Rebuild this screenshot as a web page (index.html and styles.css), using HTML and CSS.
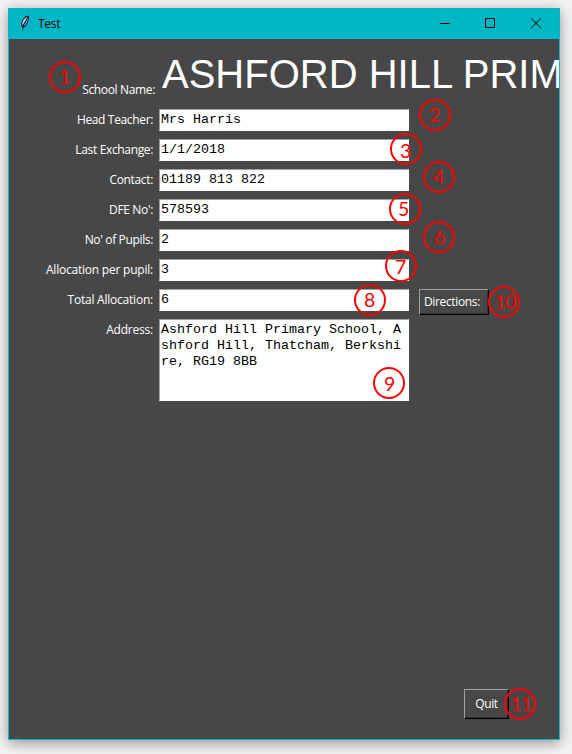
FILE: index.html
```html
<!DOCTYPE html>
<html lang="en">
<head>
<meta charset="utf-8">
<title>Test</title>
<link rel="stylesheet" href="styles.css">
</head>
<body>
<div class="window">
  <header class="titlebar">
    <svg class="feather" width="10" height="17" viewBox="0 0 10 17">
      <path d="M2.3 15.5 L2.6 12 L1.2 11 L1.3 7.5 L3.3 3.5 L6 1 L8.8 .7 L9 4 L7.5 8.5 L5.5 11.5 L3.5 12.5 L2.8 16" fill="#101822"/>
      <path d="M2.2 10.5 L2.4 7.5 L4 4.2 L7.6 1.6 L5.3 6 Z" fill="#b9d8f5"/>
      <path d="M3.4 11 L6 6.5 L8.2 2.2 L8 5 L6.6 8.5 L5 10.9 Z" fill="#4f86d0"/>
    </svg>
    <span class="title">Test</span>
    <svg class="controls" width="102" height="11" viewBox="0 0 102 11" fill="none" stroke="#000">
      <path d="M0 5.5H10M45.5 .5H54.5V9.5H45.5ZM91 .2L101 10.2M101 .2L91 10.2"/>
    </svg>
  </header>
  <main class="client">
    <div class="school">
      <span class="label school-label">School Name:</span>
      <span class="school-name">ASHFORD HILL PRIM</span>
    </div>
    <div class="form">
      <span class="label">Head Teacher:</span><div class="field">Mrs Harris</div>
      <span class="label">Last Exchange:</span><div class="field">1/1/2018</div>
      <span class="label">Contact:</span><div class="field">01189 813 822</div>
      <span class="label">DFE No':</span><div class="field">578593</div>
      <span class="label">No' of Pupils:</span><div class="field">2</div>
      <span class="label wide">Allocation per pupil:</span><div class="field">3</div>
      <span class="label wide">Total Allocation:</span><div class="field">6</div>
      <button class="button directions">Directions:</button>
      <span class="label wide">Address:</span><div class="field address">Ashford Hill Primary School, Ashford Hill, Thatcham, Berkshire, RG19 8BB</div>
    </div>
    <button class="button quit">Quit</button>
  </main>
</div>
<svg class="markers" width="572" height="754" viewBox="0 0 572 754">
  <g class="rings">
    <circle cx="65" cy="77" r="15"/><circle cx="435" cy="115" r="15"/>
    <circle cx="406" cy="149" r="15"/><circle cx="439" cy="177" r="15"/>
    <circle cx="405" cy="209" r="15"/><circle cx="439" cy="237" r="15"/>
    <circle cx="401" cy="266" r="15"/><circle cx="370" cy="300" r="15"/>
    <circle cx="389" cy="383" r="15"/><circle cx="504" cy="302" r="15"/>
    <circle cx="520" cy="704" r="15"/>
  </g>
  <g class="numbers">
    <text x="64.5" y="84">1</text><text x="434.5" y="122">2</text>
    <text x="405.5" y="158">3</text><text x="438.5" y="184">4</text>
    <text x="403.5" y="216">5</text><text x="439.5" y="244">6</text>
    <text x="400.5" y="274">7</text><text x="369.5" y="307">8</text>
    <text x="389.5" y="391">9</text><text x="505" y="309">10</text>
    <text x="521" y="711">11</text>
  </g>
</svg>
</body>
</html>
```
FILE: styles.css
```css
* { box-sizing: border-box; }
body {
  margin: 0;
  padding: 8px;
  width: 572px;
  height: 754px;
  overflow: hidden;
  position: relative;
  background: #f2f3f5;
  font: 12px/16px "Open Sans", sans-serif;
}
.window {
  width: 552px;
  height: 732px;
  border: 1px solid #12b5c1;
  background: #474747;
  box-shadow: 0 3px 13px rgba(0, 0, 0, .4);
  display: flex;
  flex-direction: column;
}
.titlebar {
  height: 30px;
  flex: none;
  display: flex;
  align-items: center;
  background: #02b7c5;
  padding: 0 17px 0 11px;
}
.feather { margin-top: -2px; }
.title { margin-left: 8px; letter-spacing: -.3px; color: #000; }
.controls { margin-left: auto; margin-top: -2px; }
.client {
  flex: 1;
  display: flex;
  flex-direction: column;
  overflow: hidden;
  color: #fff;
}
.label { letter-spacing: -.35px; text-align: right; white-space: nowrap; }
.label.wide { letter-spacing: -.22px; }
.school {
  height: 70px;
  flex: none;
  display: grid;
  grid-template-columns: 146px 1fr;
  column-gap: 7px;
  white-space: nowrap;
}
.school-label { padding-top: 43px; }
.school-name {
  padding-top: 12px;
  font: 40px/46px "Liberation Sans", sans-serif;
}
.form {
  display: grid;
  grid-template-columns: 144px 250px 70px;
  grid-template-rows: repeat(7, 22px) 82px;
  column-gap: 6px;
  row-gap: 8px;
}
.form .label { grid-column: 1; padding-top: 3px; }
.field {
  grid-column: 2;
  background: #fff;
  border: 1px solid #fff;
  border-top-color: #a0a0a0;
  border-left-color: #a0a0a0;
  padding: 2px 1px 1px;
  color: #000;
  font: 13.333px/16px "Liberation Mono", monospace;
}
.address { word-break: break-all; white-space: pre-wrap; padding-right: 4px; }
.button {
  background: #474747;
  color: #fff;
  border: 1px solid #a0a0a0;
  border-right-color: #000;
  border-bottom-color: #000;
  box-shadow: inset -1px -1px #303030;
  font: 12px/16px "Open Sans", sans-serif;
  letter-spacing: -.35px;
  padding: 0;
}
.directions {
  grid-column: 3;
  grid-row: 7;
  height: 26px;
  margin-left: 4px;
  width: 70px;
  padding-right: 4px;
}
.quit {
  width: 45px;
  height: 30px;
  margin: auto 50px 20px auto;
}
.markers { position: absolute; left: 0; top: 0; }
.rings { fill: none; stroke: #f00; stroke-width: 2; }
.numbers { fill: #f00; font: 19.5px Lato, sans-serif; text-anchor: middle; letter-spacing: -.5px; }
```
